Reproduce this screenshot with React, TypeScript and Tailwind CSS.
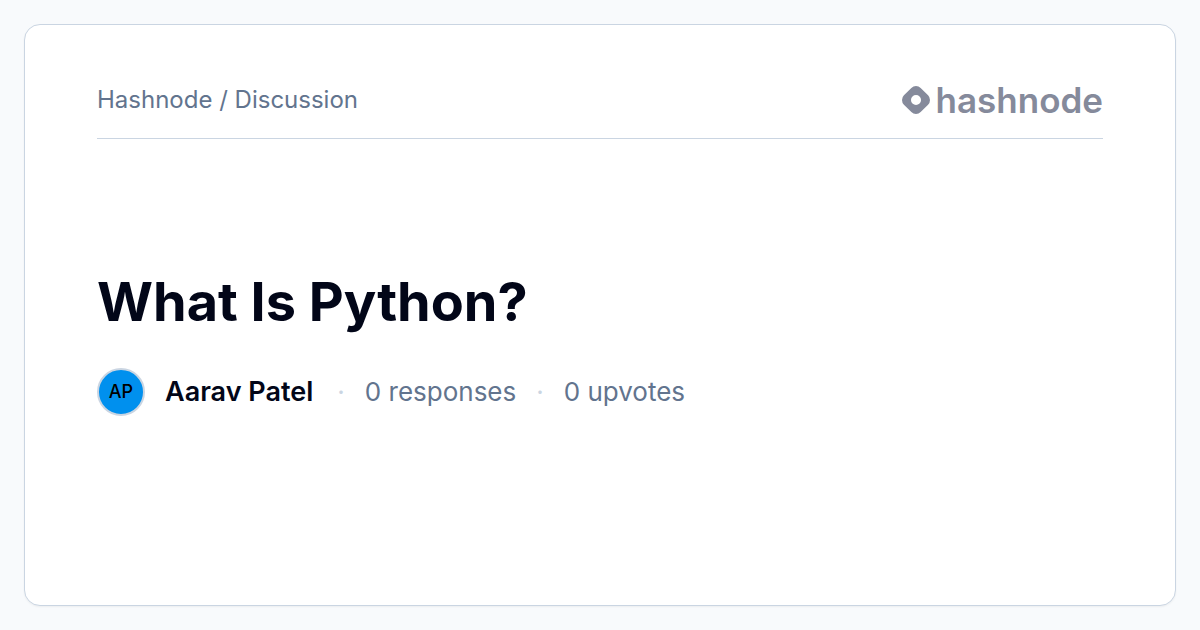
export default function App() {
  return (
    <div className="flex min-h-screen bg-slate-50 p-6 font-['Inter',sans-serif]">
      <main className="flex flex-1 flex-col rounded-2xl border border-slate-300 bg-white px-18 pt-14 pb-14 shadow-xs">
        <header className="flex items-center justify-between border-b border-slate-300 pt-px pb-5">
          <p className="text-2xl leading-9 text-slate-500">Hashnode / Discussion</p>
          <div className="flex items-center gap-1.5 text-[#858a9b]">
            <svg className="size-7" viewBox="0 0 24 24" fill="currentColor" aria-hidden="true">
              <path d="M22.351 8.019l-6.37-6.37a5.63 5.63 0 0 0-7.962 0l-6.37 6.37a5.63 5.63 0 0 0 0 7.962l6.37 6.37a5.63 5.63 0 0 0 7.962 0l6.37-6.37a5.63 5.63 0 0 0 0-7.962zM12 16.3a4.3 4.3 0 1 1 0-8.6 4.3 4.3 0 0 1 0 8.6z" />
            </svg>
            <span className="text-[35px] leading-9 font-semibold">hashnode</span>
          </div>
        </header>
        <section className="flex flex-1 flex-col justify-center gap-9">
          <h1 className="text-[54px] leading-[60px] font-bold text-slate-950">What Is Python?</h1>
          <div className="flex items-center text-[26px] leading-9 text-slate-500">
            <span className="flex size-12 items-center justify-center rounded-full border-2 border-slate-300 bg-[#0090ee] text-lg font-medium text-black">AP</span>
            <span className="mr-1 ml-5 text-[27px] font-semibold text-slate-950">Aarav Patel</span>
            <span className="mx-5 text-slate-300">·</span>
            <span>0 responses</span>
            <span className="mx-5 text-slate-300">·</span>
            <span>0 upvotes</span>
          </div>
        </section>
      </main>
    </div>
  );
}
